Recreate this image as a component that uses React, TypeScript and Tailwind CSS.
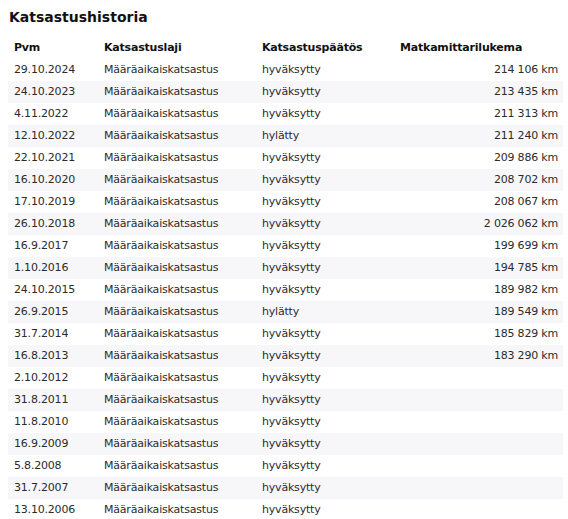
import React from "react";

const rows: [string, string, string, string][] = [
	["29.10.2024", "Määräaikaiskatsastus", "hyväksytty", "214 106 km"],
	["24.10.2023", "Määräaikaiskatsastus", "hyväksytty", "213 435 km"],
	["4.11.2022", "Määräaikaiskatsastus", "hyväksytty", "211 313 km"],
	["12.10.2022", "Määräaikaiskatsastus", "hylätty", "211 240 km"],
	["22.10.2021", "Määräaikaiskatsastus", "hyväksytty", "209 886 km"],
	["16.10.2020", "Määräaikaiskatsastus", "hyväksytty", "208 702 km"],
	["17.10.2019", "Määräaikaiskatsastus", "hyväksytty", "208 067 km"],
	["26.10.2018", "Määräaikaiskatsastus", "hyväksytty", "2 026 062 km"],
	["16.9.2017", "Määräaikaiskatsastus", "hyväksytty", "199 699 km"],
	["1.10.2016", "Määräaikaiskatsastus", "hyväksytty", "194 785 km"],
	["24.10.2015", "Määräaikaiskatsastus", "hyväksytty", "189 982 km"],
	["26.9.2015", "Määräaikaiskatsastus", "hylätty", "189 549 km"],
	["31.7.2014", "Määräaikaiskatsastus", "hyväksytty", "185 829 km"],
	["16.8.2013", "Määräaikaiskatsastus", "hyväksytty", "183 290 km"],
	["2.10.2012", "Määräaikaiskatsastus", "hyväksytty", ""],
	["31.8.2011", "Määräaikaiskatsastus", "hyväksytty", ""],
	["11.8.2010", "Määräaikaiskatsastus", "hyväksytty", ""],
	["16.9.2009", "Määräaikaiskatsastus", "hyväksytty", ""],
	["5.8.2008", "Määräaikaiskatsastus", "hyväksytty", ""],
	["31.7.2007", "Määräaikaiskatsastus", "hyväksytty", ""],
	["13.10.2006", "Määräaikaiskatsastus", "hyväksytty", ""],
];

const App = () => {
	return (
		<div className="bg-white px-2 pt-[7px] font-['DejaVu_Sans',Verdana,sans-serif] text-[#2b2b2b]">
			<h2 className="text-[14px] font-bold text-[#111] leading-[20px] pl-[1px] mb-[10px]">
				Katsastushistoria
			</h2>
			<table className="w-[555px] border-collapse text-[11px] tracking-[-0.2px]">
				<thead>
					<tr className="h-[22px] text-[#111]">
						<th className="w-[90px] px-[6px] text-left font-bold">Pvm</th>
						<th className="w-[158px] px-[6px] text-left font-bold">Katsastuslaji</th>
						<th className="w-[138px] px-[6px] text-left font-bold">Katsastuspäätös</th>
						<th className="px-[6px] text-left font-bold">Matkamittarilukema</th>
					</tr>
				</thead>
				<tbody>
					{rows.map((r, i) => (
						<tr key={i} className={i % 2 === 1 ? "h-[22px] bg-[#f7f7f9]" : "h-[22px]"}>
							<td className="px-[6px]">{r[0]}</td>
							<td className="px-[6px]">{r[1]}</td>
							<td className="px-[6px]">{r[2]}</td>
							<td className="px-[5px] text-right">{r[3]}</td>
						</tr>
					))}
				</tbody>
			</table>
		</div>
	);
};

export default App;
